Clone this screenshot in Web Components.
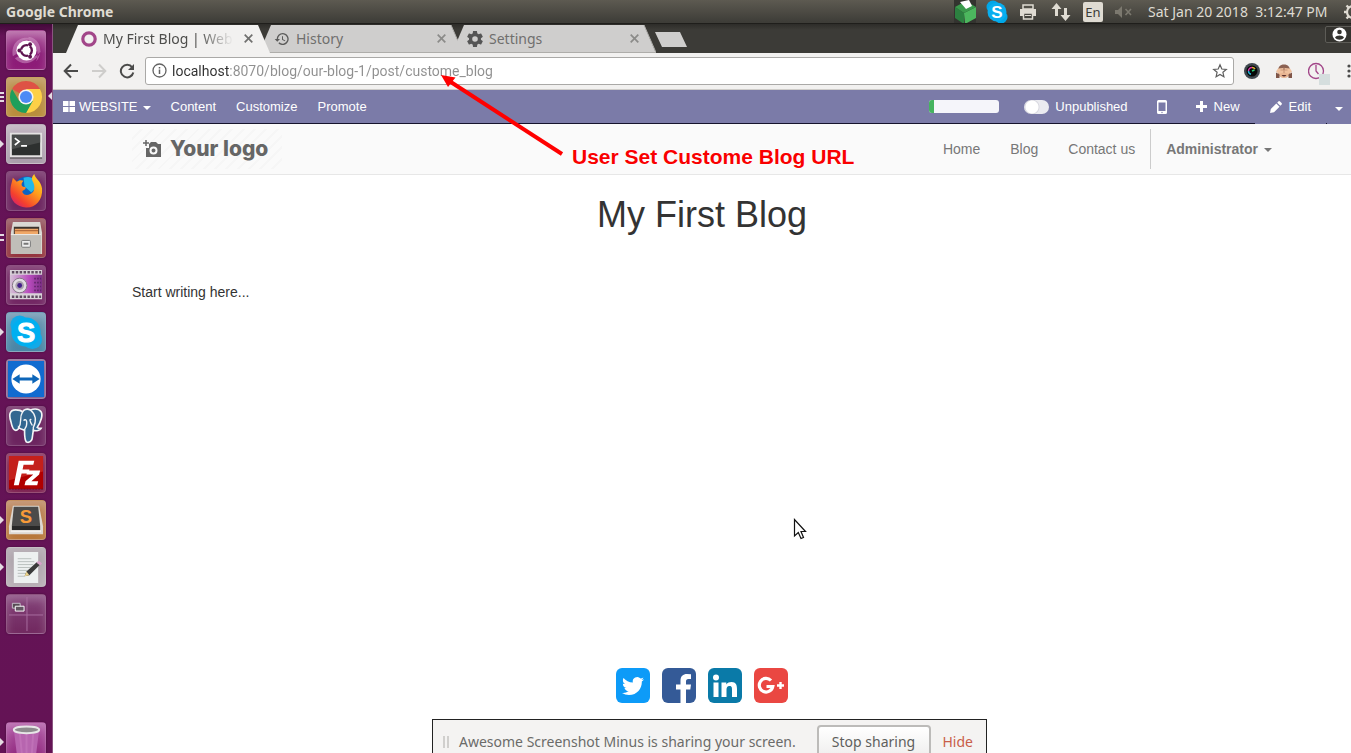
<!DOCTYPE html>
<html lang="en">
<head>
<meta charset="utf-8">
<title>My First Blog | Website</title>
<style>
  html, body { margin: 0; height: 100%; overflow: hidden; }
  body { font-family: "Liberation Sans", Arial, sans-serif; background: #fff; }
</style>
</head>
<body>
<ubuntu-desktop></ubuntu-desktop>

<script>
const UI = '"Noto Sans", "Open Sans", sans-serif';
function element(name, html) {
  customElements.define(name, class extends HTMLElement {
    constructor() {
      super();
      const t = document.createElement('template');
      t.innerHTML = html;
      this.attachShadow({ mode: 'open' }).append(t.content.cloneNode(true));
    }
  });
}

/* ---------- top panel ---------- */
element('top-panel', `
<style>
  :host { display: flex; align-items: center; height: 24px; flex: none; box-sizing: border-box; padding-left: 6px;
    background: linear-gradient(#5d5a51, #3e3d38 95%); border-bottom: 1px solid #1f1e1b; color: #dfdbd2;
    font: 14px/24px ${UI}; white-space: nowrap; overflow: hidden; }
  b { flex: 1; font-size: 14px; }
  .tray { display: flex; align-items: center; gap: 10px; flex: none; }
  svg { display: block; flex: none; }
  .printer { margin: 0 2px 0 1px; }
  .lang { width: 20px; height: 20px; line-height: 20px; border-radius: 2px; background: #dfdbd2; color: #3c3b37; text-align: center; font-size: 13px; }
  time { white-space: pre; margin-left: 5px; min-width: 183px; }
  .gear { margin: 0 -12px 0 2px; }
</style>
<b>Google Chrome</b>
<div class="tray">
  <svg width="22" height="24" viewBox="0 0 22 24"><path d="M0 0H22V24H0z" fill="#33332f"/><path d="M1 7L10 13V24L1 18z" fill="#2c8040"/><path d="M10 13L22 7V18L11 24z" fill="#4cb75e"/><path d="M1 7L12 1L22 7L10 13z" fill="#3a9a4c"/><path d="M6 2L15 0L18 6L12 9z" fill="#fff"/></svg>
  <svg width="22" height="24" viewBox="0 0 22 24"><circle cx="7" cy="7" r="6.500" fill="#00a7e8"/><circle cx="15" cy="17" r="6.500" fill="#00a7e8"/><circle cx="11" cy="12" r="9.500" fill="#08aeef"/><text x="11" y="18" font-family="Liberation Sans" font-weight="bold" font-size="17" text-anchor="middle" fill="#fff">S</text></svg>
  <svg class="printer" width="18" height="18" viewBox="0 0 18 18"><path d="M4 2H14V6H4z" fill="none" stroke="#dfdbd2" stroke-width="1.500"/><path d="M1 6H17V13H14V10H4V13H1z" fill="#dfdbd2"/><path d="M4.500 10H13.500V16H4.500z" fill="none" stroke="#dfdbd2" stroke-width="1.500"/><path d="M6 12.500H12" stroke="#dfdbd2"/></svg>
  <svg width="24" height="20" viewBox="0 0 24 20"><path d="M7.500 1L12.500 7H9V14H6V7H2.500zM16.500 19L21.500 13H18V6H15V13H11.500z" fill="#dfdbd2"/></svg>
  <span class="lang">En</span>
  <svg width="20" height="16" viewBox="0 0 20 16"><path d="M2 6H5L9 2V14L5 10H2z" fill="#7c796f"/><path d="M12.500 5L18 11M18 5L12.500 11" stroke="#7c796f" stroke-width="1.600"/></svg>
  <time>Sat Jan 20 2018  3:12:47 PM</time>
  <svg class="gear" width="20" height="20" viewBox="0 0 20 20"><circle cx="10" cy="10" r="6" fill="none" stroke="#dfdbd2" stroke-width="2.200"/><path d="M10 1V10M10 16V19M1 10H4M3.500 3.500L5.500 5.500M3.500 16.500L5.500 14.500" stroke="#dfdbd2" stroke-width="2.400"/></svg>
</div>`);

/* ---------- launcher ---------- */
customElements.define('launcher-item', class extends HTMLElement {
  connectedCallback() {
    const mark = this.getAttribute('mark');
    const marks = {
      one: '<path d="M0 16L4 20L0 24z"/>',
      two: '<path d="M0 16H4V18H0zM0 21H4V23H0z"/>',
      three: '<path d="M0 15H4V17H0zM0 19H4V21H0zM0 23H4V25H0z"/>'
    };
    const root = this.attachShadow({ mode: 'open' });
    root.innerHTML = `
<style>
  :host { display: block; position: relative; width: 52px; height: 40px; flex: none; }
  button { display: block; width: 40px; height: 40px; margin: 0 0 0 6px; padding: 0; box-sizing: border-box; overflow: hidden;
    border: 1px solid rgba(255,255,255,.2); border-radius: 4px; background: ${this.getAttribute('tint') || '#701d60'};
    box-shadow: inset 0 5px 8px rgba(255,255,255,.22), 0 0 2px rgba(40,0,35,.6); }
  ::slotted(svg) { display: block; width: 38px; height: 38px; }
  .mark { position: absolute; left: 0; top: 0; fill: #e4dce2; }
  .focus { position: absolute; right: 0; top: 0; fill: #e4dce2; }
</style>
<button type="button" aria-label="${this.getAttribute('label')}"><slot></slot></button>
${mark ? `<svg class="mark" width="5" height="40">${marks[mark]}</svg>` : ''}
${this.hasAttribute('focused') ? '<svg class="focus" width="4" height="40"><path d="M4 15L0 19L4 23z"/></svg>' : ''}`;
  }
});

element('app-launcher', `
<style>
  :host { display: flex; flex-direction: column; gap: 7px; width: 52px; flex: none; box-sizing: content-box; padding-top: 6px;
    background: linear-gradient(#43093a, #651357 12px, #641355); border-right: 1px solid #8a5480; overflow: hidden; }
  .trash { margin: auto 0 -9px; }
</style>
<launcher-item label="Search" tint="linear-gradient(#b05b9f,#8b1d78 60%,#8e1b77)">
  <svg viewBox="0 0 39 39"><path d="M6 26C3 8 20 4 26 9C14 7 10 15 12 22zM22 6C36 8 37 25 30 31C34 20 29 14 23 13zM8 28C18 39 32 30 35 20C30 28 20 29 14 25z" fill="#dca9d2" opacity=".45"/><circle cx="20" cy="20" r="10.300" fill="#fff"/><circle cx="20" cy="20" r="5.500" fill="none" stroke="#5e1550" stroke-width="2.400"/><path d="M20 20L10 20M20 20L25 11M20 20L25 29" stroke="#fff" stroke-width="1.600"/><circle cx="12.700" cy="20" r="2" fill="#5e1550"/><circle cx="23.700" cy="13.600" r="2" fill="#5e1550"/><circle cx="23.700" cy="26.400" r="2" fill="#5e1550"/></svg>
</launcher-item>
<launcher-item label="Google Chrome" mark="three" focused tint="linear-gradient(#b98f4e,#b98d3a)">
  <svg viewBox="0 0 39 39"><path d="M19.500 19.500L5.200 11.300A16.500 16.500 0 0 1 33.800 11.300z" fill="#de5245"/><path d="M19.500 11.300H33.800A16.500 16.500 0 0 1 19.500 36L26 23z" fill="#fdd047"/><path d="M5.200 11.300A16.500 16.500 0 0 0 19.500 36L26.500 23.500L12.500 23.500z" fill="#1e9f5b"/><circle cx="19.500" cy="19.500" r="7.800" fill="#f4f4f4"/><circle cx="19.500" cy="19.500" r="6.200" fill="#4c8af5"/></svg>
</launcher-item>
<launcher-item label="Terminal" mark="one" tint="linear-gradient(#bcaebb,#a99caa)">
  <svg viewBox="0 0 39 39"><path d="M3 8H36V33H3z" fill="#e4e2e2"/><path d="M3 33H36V35H3z" fill="#756f74"/><path d="M5 10H34V31H5z" fill="#2d302f"/><path d="M5 10H34V18L5 25z" fill="#484b4a"/><path d="M8 13.500L12.500 17L8 20.500M14.500 21.500H20.500" fill="none" stroke="#fff" stroke-width="1.700"/></svg>
</launcher-item>
<launcher-item label="Firefox" tint="#6c245f">
  <svg viewBox="0 0 39 39"><defs><linearGradient id="ff" x1="1" y1="0" x2=".2" y2="1"><stop offset="0" stop-color="#ffe226"/><stop offset=".45" stop-color="#ff9a1c"/><stop offset=".8" stop-color="#f4402e"/><stop offset="1" stop-color="#d5206c"/></linearGradient></defs><circle cx="20" cy="17" r="12.500" fill="#0a63c4"/><path d="M17 6C24 3 30 7 31 15L25 21L18 15z" fill="#22b8e8"/><path d="M6 6L10 10C12 8 15 8 17 9C15 11 14 13 16 15C18 16 20 15 19 17C18 19 15 19 16 21C18 25 24 24 27 20C29 17 28 12 26 9C25 6 26 4 28 2C29 7 35 9 36 17C37 29 29 37 19.500 36.500C10 36 3 29 3.500 20C3.500 14 5 11 6 6z" fill="url(#ff)"/></svg>
</launcher-item>
<launcher-item label="Files" mark="two" tint="linear-gradient(#8d4b55,#94323c)">
  <svg viewBox="0 0 39 39"><path d="M6 3H34L36 14V36H4V14z" fill="#dad8d3"/><path d="M7 8H33V17H7z" fill="#3c342e"/><path d="M8 10H32V17H8z" fill="#f0a868"/><path d="M8 12H32" stroke="#a65c30"/><path d="M4 16H35V36H4z" fill="#c0beb9"/><path d="M4 16H35" stroke="#eeeeeb"/><rect x="15" y="22" width="9" height="7" rx="1" fill="#eee" stroke="#777"/><path d="M17 25.500H22" stroke="#777" stroke-width="2"/></svg>
</launcher-item>
<launcher-item label="Screen recorder" tint="#722663">
  <svg viewBox="0 0 39 39"><defs><linearGradient id="fm" x1="0" x2="1"><stop stop-color="#d5c1d6"/><stop offset=".6" stop-color="#b84bbd"/><stop offset="1" stop-color="#7d2f86"/></linearGradient></defs><path d="M3 4H36V34H3z" fill="#d9d3d9"/><path d="M3 9H36V28H3z" fill="url(#fm)"/><path d="M5 6.500H35M5 31.500H35" stroke="#604c62" stroke-width="2.500" stroke-dasharray="2.500 1.500"/><path d="M28 13H35M28 17H35M28 21H35M28 25H35" stroke="#5b2365" stroke-width="1.700" stroke-dasharray="1.500 1.500"/><circle cx="13" cy="20" r="7.500" fill="#e2dde3" stroke="#827584"/><circle cx="13" cy="20" r="4.500" fill="#a9a2ad"/><circle cx="13" cy="20" r="2.500" fill="#45208a"/></svg>
</launcher-item>
<launcher-item label="Skype" mark="one" tint="linear-gradient(#6d94b0,#4684a5)">
  <svg viewBox="0 0 39 39"><circle cx="13" cy="12" r="9.500" fill="#12a9e7"/><circle cx="26" cy="27" r="10" fill="#12a9e7"/><circle cx="19.500" cy="19.500" r="15" fill="#00aff0"/><text x="19.500" y="29.500" font-family="Liberation Sans" font-weight="bold" font-size="28" text-anchor="middle" fill="#fff" stroke="#fff">S</text></svg>
</launcher-item>
<launcher-item label="TeamViewer" tint="#87628f">
  <svg viewBox="0 0 39 39"><path d="M1 1H38V38H1z" fill="#116bd0"/><circle cx="19.500" cy="19.500" r="15" fill="#fff"/><path d="M5.500 19.500L13 14.500V18H26V14.500L33.500 19.500L26 24.500V21H13V24.500z" fill="#0d66b9"/></svg>
</launcher-item>
<launcher-item label="pgAdmin" tint="#6c245f">
  <svg viewBox="0 0 39 39"><path d="M9 3C2 3 2 9 4 15C5 20 7 24 9 24C11 24 12 22 12 21C14 23 17 23 18 24C18 29 18 34 20 36C23 37 26 35 26 31L27 24C30 25 34 24 35 22C34 22 32 22 31 21C35 15 37 8 35 5C32 1 27 2 24 3C20 1 17 3 16 5C14 3 12 3 9 3z" fill="#336791" stroke="#f2f4f6" stroke-width="1.700"/><path d="M16 5C12 11 16 16 12 21M24 3C30 8 30 15 27 21L27 24M17 14C19 12 21 13 20 19C19 22 18 22 18 24M25 13C23 12 23 14 26 19" fill="none" stroke="#f2f4f6" stroke-width="1.400"/></svg>
</launcher-item>
<launcher-item label="FileZilla" tint="#7f2353">
  <svg viewBox="0 0 39 39"><path d="M2 2H37V36H2z" fill="#b00000"/><path d="M2 2H37V18L2 27z" fill="#c4201b"/><path d="M2 36H37" stroke="#6e0d20" stroke-dasharray="2 1"/><path d="M7 32L12 7H28L27 11H17L16 16H23L22 20H15L12 32zM21 17H34L33 21L25 28H32L31 32H18L19 28L27 21H20z" fill="#fff"/></svg>
</launcher-item>
<launcher-item label="Sublime Text" mark="one" tint="linear-gradient(#b9825a,#b87637)">
  <svg viewBox="0 0 39 39"><path d="M6 5H33L37 26V34H2V26z" fill="#ddd8d2"/><path d="M7 6H32L34 25H5z" fill="#4c4b4a"/><path d="M5 25H34V30H5z" fill="#282828"/><path d="M4 31H35" stroke="#f2f0ed" stroke-width="2"/><text x="19.500" y="22.500" font-family="Liberation Sans" font-weight="bold" font-size="19" text-anchor="middle" fill="#f79a38">S</text></svg>
</launcher-item>
<launcher-item label="Text Editor" mark="one" tint="linear-gradient(#aaa0a8,#b9b0b6)">
  <svg viewBox="0 0 39 39"><path d="M7 4H32V36H7z" fill="#edf0f0"/><path d="M11 11H25M11 14H28M11 17H27M11 20H24M11 23H26M11 26H20M11 29H18" stroke="#b9bfbd"/><path d="M18 29L20 24L31 14L34 17L23 28z" fill="#3b3b3b"/><path d="M30 15L33 13L36 16L34 18z" fill="#d7a2c9"/><path d="M18 29L20 24L23 28z" fill="#ecd48d"/></svg>
</launcher-item>
<launcher-item label="Workspace Switcher" tint="linear-gradient(#84447a,#71285f)">
  <svg viewBox="0 0 39 39"><path d="M2 20.500H37M20.500 2V37" stroke="#a86e9f"/><path d="M5.500 8.500H13.500V13.500H5.500z" fill="#564b53" stroke="#c6becb"/><path d="M8.500 11.500H17.500V16.500H8.500z" fill="#635662" stroke="#fff"/></svg>
</launcher-item>
<launcher-item class="trash" label="Trash" mark="one" tint="linear-gradient(#b058a5,#8d237a)">
  <svg viewBox="0 0 39 39"><path d="M7 7H33L29 39H11z" fill="#b765af"/><path d="M13 9L16 39M20 9V39M27 9L25 39" stroke="#d78ecb" stroke-width="2" opacity=".3"/><ellipse cx="20" cy="7" rx="13" ry="3.500" fill="#8e8b8e" stroke="#e7e6e7" stroke-width="2"/></svg>
</launcher-item>`);

/* ---------- browser tabs ---------- */
customElements.define('browser-tab', class extends HTMLElement {
  connectedCallback() {
    const on = this.hasAttribute('active');
    this.attachShadow({ mode: 'open' }).innerHTML = `
<style>
  :host { display: flex; align-items: center; position: relative; width: 204px; height: 29px; box-sizing: border-box; margin-right: -11px;
    padding: 0 17px 0 15px; z-index: ${on ? 3 : 2}; color: ${on ? '#4e4e4c' : '#6f6f6d'}; font: 14px/28px ${UI}; }
  .shape { position: absolute; inset: 0; z-index: -1; }
  .title { flex: 1; margin: 0 8px 0 6px; overflow: hidden; white-space: nowrap; ${on ? 'mask-image: linear-gradient(90deg,#000 72%,transparent 98%);' : ''} }
  button { width: 9px; height: 9px; padding: 0; border: 0; background: none; flex: none; }
  button svg { display: block; }
</style>
<svg class="shape" width="204" height="29" viewBox="0 0 204 29"><path d="M0 29L12 1H192L204 29z" fill="${on ? '#f2f1f0' : '#cfcecd'}"/>${on ? '' : '<path d="M192 1L204 28.500M0 28.500H204" stroke="#aeadaa" fill="none"/>'}</svg>
<slot name="icon"></slot><span class="title"><slot></slot></span>
<button type="button" aria-label="Close tab"><svg width="9" height="9" viewBox="0 0 9 9"><path d="M.7 .7L8.300 8.300M8.300 .7L.7 8.300" stroke="${on ? '#70706f' : '#8b8b89'}" stroke-width="1.700"/></svg></button>`;
  }
});

element('tab-strip', `
<style>
  :host { display: flex; height: 29px; padding-left: 13px; background: linear-gradient(#2d2c29, #3c3b37 6px); overflow: hidden; position: relative; }
  svg { display: block; flex: none; }
  .new { width: 32px; height: 15px; margin: 8px 0 0 10px; padding: 0; border: 0; background: #cfcecd; clip-path: polygon(0 0, 25px 0, 100% 100%, 7px 100%); }
  .user { width: 28px; height: 17px; margin: 2px -2px 0 auto; border: 1px solid #5d5c57; padding: 0 6px; background: #34332f; border-radius: 2px; }
</style>
<browser-tab active><svg slot="icon" width="16" height="16" viewBox="0 0 16 16"><circle cx="8" cy="8" r="6.200" fill="none" stroke="#a24689" stroke-width="3.200"/></svg>My First Blog | Webs</browser-tab>
<browser-tab><svg slot="icon" width="16" height="16" viewBox="0 0 24 24" fill="#5b5b5a"><path d="M13 3a9 9 0 0 0-9 9H1l3.900 4L9 12H6a7 7 0 1 1 2 4.900l-1.400 1.400A9 9 0 1 0 13 3zm-1 5v5l4.200 2.500.8-1.200-3.500-2.100V8z"/></svg>History</browser-tab>
<browser-tab><svg slot="icon" width="16" height="16" viewBox="2 2 20 20" fill="#555"><path d="M19.430 12.980c.04-.32.070-.64.070-.98s-.03-.66-.07-.98l2.110-1.650c.19-.15.240-.42.120-.64l-2-3.460c-.12-.22-.39-.3-.61-.22l-2.490 1c-.52-.4-1.080-.73-1.690-.98l-.38-2.650C14.460 2.180 14.250 2 14 2h-4c-.25 0-.46.180-.49.420l-.38 2.650c-.61.25-1.170.59-1.690.98l-2.490-1c-.23-.09-.49 0-.61.220l-2 3.460c-.13.220-.07.490.12.640l2.110 1.650c-.04.32-.07.650-.07.980s.03.660.07.980l-2.110 1.650c-.19.150-.24.420-.12.640l2 3.460c.12.220.39.300.61.220l2.490-1c.52.400 1.080.730 1.690.980l.38 2.650c.03.240.240.420.490.420h4c.25 0 .46-.18.490-.42l.38-2.650c.61-.25 1.170-.59 1.690-.98l2.490 1c.23.090.490 0 .61-.22l2-3.460c.12-.22.070-.49-.12-.64zM12 15.500A3.500 3.500 0 1 1 12 8.500A3.500 3.500 0 0 1 12 15.500z"/></svg>Settings</browser-tab>
<button class="new" type="button" aria-label="New tab"></button>
<button class="user" type="button" aria-label="Profile"><svg width="15" height="15" viewBox="0 0 15 15"><circle cx="7.500" cy="7.500" r="7" fill="#fff"/><circle cx="7.500" cy="5" r="2.300" fill="#34332f"/><path d="M3 10.500C4 7.800 11 7.800 12 10.500C10 13.500 5 13.500 3 10.500z" fill="#34332f"/></svg></button>`);

/* ---------- toolbar ---------- */
element('browser-toolbar', `
<style>
  :host { display: flex; align-items: center; height: 37px; box-sizing: border-box; padding: 0 0 1px 10px; background: #f2f1f0; border-bottom: 1px solid #cfcdca; overflow: hidden; }
  button { width: 16px; height: 16px; padding: 0; border: 0; background: none; flex: none; margin-right: 12px; }
  svg { display: block; flex: none; }
  .reload { margin-right: 10px; }
  .box { display: flex; align-items: center; flex: 1; height: 28px; box-sizing: border-box; border: 1px solid #aaa9a7; border-radius: 3px; background: #fff; padding: 0 5px 0 6px; margin-right: 10px; }
  .box button { margin: 0; }
  input { flex: 1; min-width: 0; height: 26px; border: 0; outline: 0; padding: 0; margin-left: 5px; font: 14px/26px Roboto, ${UI};
    background: linear-gradient(90deg, #303030 57px, #8f8f8f 57px); -webkit-background-clip: text; background-clip: text; -webkit-text-fill-color: transparent; }
  .ext { margin-right: 16px; }
  .dots { width: 4px; margin: 0 0 0 15px; }
</style>
<button type="button" aria-label="Back"><svg width="16" height="16" viewBox="0 0 16 16"><path d="M15 8H2M8 1.500L1.700 8L8 14.500" fill="none" stroke="#4b4b4a" stroke-width="2"/></svg></button>
<button type="button" aria-label="Forward" disabled><svg width="16" height="16" viewBox="0 0 16 16"><path d="M1 8H14M8 1.500L14.300 8L8 14.500" fill="none" stroke="#cecdcb" stroke-width="2"/></svg></button>
<button class="reload" type="button" aria-label="Reload"><svg width="16" height="16" viewBox="0 0 16 16"><path d="M13.200 4.300A6.300 6.300 0 1 0 14.300 9.500" fill="none" stroke="#4b4b4a" stroke-width="2"/><path d="M15 1V7H9z" fill="#4b4b4a"/></svg></button>
<div class="box">
  <svg width="15" height="15" viewBox="0 0 15 15"><circle cx="7.500" cy="7.500" r="6.500" fill="none" stroke="#626262" stroke-width="1.300"/><path d="M7.500 6.500V11M7.500 4V5.400" stroke="#626262" stroke-width="1.500"/></svg>
  <input aria-label="Address" value="localhost:8070/blog/our-blog-1/post/custome_blog">
  <button type="button" aria-label="Bookmark"><svg width="16" height="16" viewBox="0 0 16 16"><path d="M8 1.800L9.800 6L14.300 6.400L10.900 9.300L11.900 13.700L8 11.400L4.100 13.700L5.100 9.300L1.700 6.400L6.200 6z" fill="none" stroke="#5e5e5e" stroke-width="1.200"/></svg></button>
</div>
<svg class="ext" width="16" height="16" viewBox="0 0 16 16"><circle cx="8" cy="8" r="8" fill="#40484f"/><circle cx="8" cy="8" r="5.500" fill="#050707"/><path d="M4.500 8A3.500 3.500 0 0 1 8 4.500" stroke="#df35af" stroke-width="1.500" fill="none"/><path d="M8 4.500A3.500 3.500 0 0 1 11 6" stroke="#e8b331" stroke-width="1.500" fill="none"/><path d="M4.500 8A3.500 3.500 0 0 0 7 11.300" stroke="#24b4d8" stroke-width="1.500" fill="none"/><path d="M8 8L10.500 7" stroke="#2fd07b" stroke-width="1.500"/></svg>
<svg class="ext" width="16" height="16" viewBox="0 0 16 16"><path d="M8 1.500C12 1.500 14 4 14 8V13H2V8C2 4 4 1.500 8 1.500z" fill="#8b6152"/><ellipse cx="8" cy="11" rx="5.500" ry="4" fill="#e8b592"/><path d="M0 8.500L2 5.500L7.500 5V9.500L3 11zM16 8.500L14 5.500L8.500 5V9.500L13 11z" fill="#f0c29f"/><path d="M8 4.500V10M4.500 7H7.500M8.500 7H11.500" stroke="#bd8a70" stroke-width=".7"/><path d="M0 9.500L3.500 11.500V15H0zM16 9.500L12.500 11.500V15H16z" fill="#805648"/><path d="M5.500 12H10.500Q8 15 5.500 12z" fill="#5b302c"/></svg>
<svg width="24" height="30" viewBox="0 0 24 30"><circle cx="8" cy="15" r="7.500" fill="none" stroke="#a24689" stroke-width="1.300"/><path d="M8 9V15L10.500 18" stroke="#a24689" stroke-width="1.300" fill="none"/><rect x="11" y="18" width="11" height="11" fill="#d5dede"/></svg>
<button class="dots" type="button" aria-label="Menu"><svg width="4" height="16" viewBox="0 0 4 16" fill="#4b4b4a"><circle cx="2" cy="3" r="1.600"/><circle cx="2" cy="8" r="1.600"/><circle cx="2" cy="13" r="1.600"/></svg></button>`);

/* ---------- website editor bar ---------- */
element('editor-bar', `
<style>
  :host { display: flex; align-items: stretch; height: 34px; box-sizing: border-box; padding-left: 10px; background: #7b7ba8; border-bottom: 1px solid #15132c; color: #fff; font-size: 13px; line-height: 33px; white-space: nowrap; }
  nav { display: flex; gap: 20px; flex: 1; }
  a, button, label { display: flex; align-items: center; color: #fff; font: inherit; text-decoration: none; background: none; border: 0; padding: 0; }
  svg { display: block; flex: none; fill: #fff; }
  nav svg { margin-right: 4px; }
  .caret { border: 4px solid transparent; border-top-color: #fff; border-bottom: 0; margin: 2px 0 0 5px; }
  progress { -webkit-appearance: none; appearance: none; width: 70px; height: 13px; border: 0; border-radius: 3px; overflow: hidden; align-self: center; margin-right: 25px; }
  progress::-webkit-progress-bar { background: #f5f5fa; }
  progress::-webkit-progress-value { background: #45b35f; }
  input { appearance: none; width: 25px; height: 14px; margin: 0 6px 0 0; border-radius: 7px; background: radial-gradient(circle at 8px 7px, #fff 6px, #d8d8e0 7px, #ebebf0 8px); }
  .phone { margin: 0 29px; }
  .new svg { margin-right: 7px; }
  .edit { margin: 0 1px -1px 15px; padding: 0 15px 1px 15px; background: #7b7ba8; }
  .edit svg { margin-right: 7px; }
  .more { padding: 2px 8px 0 8px; margin-bottom: -1px; background: #7b7ba8; }
  .more .caret { margin-left: 0; }
</style>
<nav>
  <a href="#"><svg width="12" height="11"><path d="M0 0H5.500V5H0zM6.500 0H12V5H6.500zM0 6H5.500V11H0zM6.500 6H12V11H6.500z"/></svg>WEBSITE<i class="caret"></i></a>
  <a href="#">Content</a><a href="#">Customize</a><a href="#">Promote</a>
</nav>
<progress value="7" max="100" aria-label="Promotion progress"></progress>
<label><input type="checkbox">Unpublished</label>
<button class="phone" type="button" aria-label="Mobile preview"><svg width="10" height="14" viewBox="0 0 10 14"><path fill-rule="evenodd" d="M1.500 0H8.500Q10 0 10 1.500V12.500Q10 14 8.500 14H1.500Q0 14 0 12.500V1.500Q0 0 1.500 0zM1.500 2.500V11H8.500V2.500z"/><circle cx="5" cy="12.500" r=".7" fill="#7c7bad"/></svg></button>
<button class="new" type="button"><svg width="11" height="11"><path d="M4 0H7V4H11V7H7V11H4V7H0V4H4z"/></svg>New</button>
<button class="edit" type="button"><svg width="12" height="12" viewBox="0 0 12 12"><path d="M0 12L.8 8L6.300 2.500L9.500 5.700L4 11.200zM7.200 1.700L8.600 .3Q9.300-.2 10 .4L11.600 2Q12.200 2.700 11.700 3.400L10.300 4.800z"/></svg>Edit</button>
<button class="more" type="button" aria-label="More"><i class="caret"></i></button>`);

/* ---------- site header ---------- */
element('site-header', `
<style>
  :host { display: block; background: #fafafa; border-bottom: 1px solid #e7e7e7; }
  .in { display: flex; justify-content: space-between; max-width: 1140px; margin: 0 auto; padding: 5px 0; height: 40px; font-size: 14px; line-height: 40px; }
  .logo { display: flex; align-items: center; box-sizing: border-box; width: 150px; height: 40px; padding-left: 11px; color: #666; text-decoration: none; white-space: nowrap; font: 800 21px/40px Inter, sans-serif; background: repeating-linear-gradient(135deg, #fafafa 0 6px, #f6f6f6 6px 8px); }
  .logo svg { margin-right: 8px; flex: none; }
  nav { display: flex; }
  nav a { color: #777; text-decoration: none; padding: 0 15px; }
  nav .user { border-left: 1px solid #ccc; padding-right: 0; font-weight: bold; display: flex; align-items: center; }
  i { border: 4px solid transparent; border-top-color: #777; border-bottom: 0; margin: 2px 0 0 6px; }
</style>
<div class="in">
  <a class="logo" href="#"><svg width="19" height="18" viewBox="0 0 19 18"><path fill="#666" fill-rule="evenodd" d="M6 4L8 2H13L15 4H18V17H3V8H6zM10.500 6.500A4 4 0 1 0 10.500 14.500A4 4 0 1 0 10.500 6.500zM10.500 8.500A2 2 0 1 1 10.500 12.500A2 2 0 1 1 10.500 8.500z"/><path d="M3 0V6M0 3H6" stroke="#666" stroke-width="1.500"/></svg>Your logo</a>
  <nav><a href="#">Home</a><a href="#">Blog</a><a href="#">Contact us</a><a class="user" href="#">Administrator<i></i></a></nav>
</div>`);

/* ---------- blog post ---------- */
element('blog-post', `
<style>
  :host { display: flex; flex-direction: column; flex: 1; width: 100%; max-width: 1140px; margin: 0 auto; color: #333; }
  h1 { margin: 20px 0 0; font-size: 36px; line-height: 40px; font-weight: normal; text-align: center; }
  p { margin: 47px 0 0; font-size: 14px; line-height: 20px; }
  .share { display: flex; justify-content: center; gap: 12px; margin: auto 0 50px; }
  .share a, .share svg { display: block; }
</style>
<h1>My First Blog</h1>
<p>Start writing here...</p>
<div class="share">
  <a href="#" aria-label="Twitter"><svg width="34" height="35" viewBox="0 0 34 35"><rect width="34" height="35" rx="6" fill="#0d9bf8"/><path transform="translate(6 7) scale(.92)" fill="#fff" d="M23.950 4.570a10 10 0 0 1-2.820.77 4.960 4.960 0 0 0 2.160-2.720c-.95.550-2 .950-3.120 1.180a4.920 4.920 0 0 0-8.380 4.480C7.690 8.090 4.070 6.130 1.640 3.160a4.820 4.820 0 0 0-.66 2.470c0 1.710.87 3.210 2.180 4.100a4.900 4.900 0 0 1-2.230-.61v.060a4.920 4.920 0 0 0 3.950 4.830 5 5 0 0 1-2.210.080 4.940 4.940 0 0 0 4.600 3.420A9.870 9.870 0 0 1 0 19.540a13.990 13.990 0 0 0 7.550 2.210c9.050 0 14-7.500 14-13.980 0-.21 0-.42-.02-.63A9.940 9.940 0 0 0 24 4.590z"/></svg></a>
  <a href="#" aria-label="Facebook"><svg width="34" height="35" viewBox="0 0 34 35"><rect width="34" height="35" rx="6" fill="#345a97"/><path d="M18.500 35V21.500H14V16.500H18.500V13C18.500 8 21 6 25 6Q27.500 6 29 6.300V11H26.500C24.500 11 24 12 24 13.500V16.500H29L28.300 21.500H24V35z" fill="#fff"/></svg></a>
  <a href="#" aria-label="LinkedIn"><svg width="34" height="35" viewBox="0 0 34 35"><rect width="34" height="35" rx="6" fill="#0a7aa8"/><circle cx="8" cy="9.500" r="3" fill="#fff"/><path d="M5.500 14.500H10.500V29H5.500zM13.500 14.500H18.300V16.500C19.500 14.700 21.500 14 23.500 14C28 14 29 17 29 21V29H24V22C24 20 24 18 21.500 18C19 18 18.500 20 18.500 22V29H13.500z" fill="#fff"/></svg></a>
  <a href="#" aria-label="Google Plus"><svg width="34" height="35" viewBox="0 0 34 35"><rect width="34" height="35" rx="6" fill="#ea4742"/><path d="M17 12.500A6.800 6.800 0 1 0 18.800 18.500H12.500" fill="none" stroke="#fff" stroke-width="3.200"/><path d="M26.500 14V21M23 17.500H30" stroke="#fff" stroke-width="2.400"/></svg></a>
</div>`);

/* ---------- screen sharing notice ---------- */
element('share-notice', `
<style>
  :host { display: flex; align-items: center; position: absolute; left: 432px; top: 719px; height: 46px; width: 555px; box-sizing: border-box; padding: 0 13px 0 10px; background: #f4f3f2; border: 1px solid #222; color: #6b6b69; font: 14px/44px ${UI}; white-space: nowrap; }
  .grip { width: 2px; height: 12px; border: 2px solid #d0cfcd; border-width: 0 2px; margin: 0 10px 0 0; }
  .text { flex: 1; }
  button { font: inherit; line-height: 30px; height: 34px; box-sizing: border-box; width: 114px; padding: 0; border: 2px solid #bcbbb9; border-radius: 4px; background: linear-gradient(#fff,#efeeed); color: #5f5f5d; margin-right: 12px; }
  a { color: #c95e49; text-decoration: none; }
</style>
<i class="grip"></i><span class="text">Awesome Screenshot Minus is sharing your screen.</span><button type="button">Stop sharing</button><a href="#">Hide</a>`);

/* ---------- annotation and pointer ---------- */
element('url-callout', `
<style>
  :host { position: absolute; left: 440px; top: 74px; display: flex; align-items: flex-end; gap: 6px; pointer-events: none; }
  svg { display: block; }
  b { color: #f90000; font-size: 21px; line-height: 24px; margin-bottom: -12px; white-space: nowrap; text-shadow: 0 0 2px #fff, 0 0 2px #fff; }
</style>
<svg width="126" height="83" viewBox="0 0 126 83"><path d="M10 7.500L122 80" stroke="#f00" stroke-width="4"/><path d="M1 1L15.500 3.500L8 13z" fill="#f00"/></svg><b>User Set Custome Blog URL</b>`);

element('mouse-pointer', `
<style>:host { position: absolute; left: 793px; top: 518px; } svg { display: block; }</style>
<svg width="15" height="23" viewBox="0 0 15 23"><path d="M1.500 1.500V18L5.300 14.500L8 20.500L10.500 19.500L8 13.500H12.500z" fill="#fff" stroke="#111" stroke-width="1.200"/></svg>`);

element('ubuntu-desktop', `
<style>
  :host { display: flex; flex-direction: column; height: 100vh; position: relative; overflow: hidden; }
  .work { display: flex; flex: 1; min-height: 0; }
  main { display: flex; flex-direction: column; flex: 1; min-width: 0; background: #fff; }
</style>
<top-panel></top-panel>
<div class="work">
  <app-launcher></app-launcher>
  <main><tab-strip></tab-strip><browser-toolbar></browser-toolbar><editor-bar></editor-bar><site-header></site-header><blog-post></blog-post></main>
</div>
<share-notice></share-notice><url-callout></url-callout><mouse-pointer></mouse-pointer>`);
</script>
</body>
</html>
